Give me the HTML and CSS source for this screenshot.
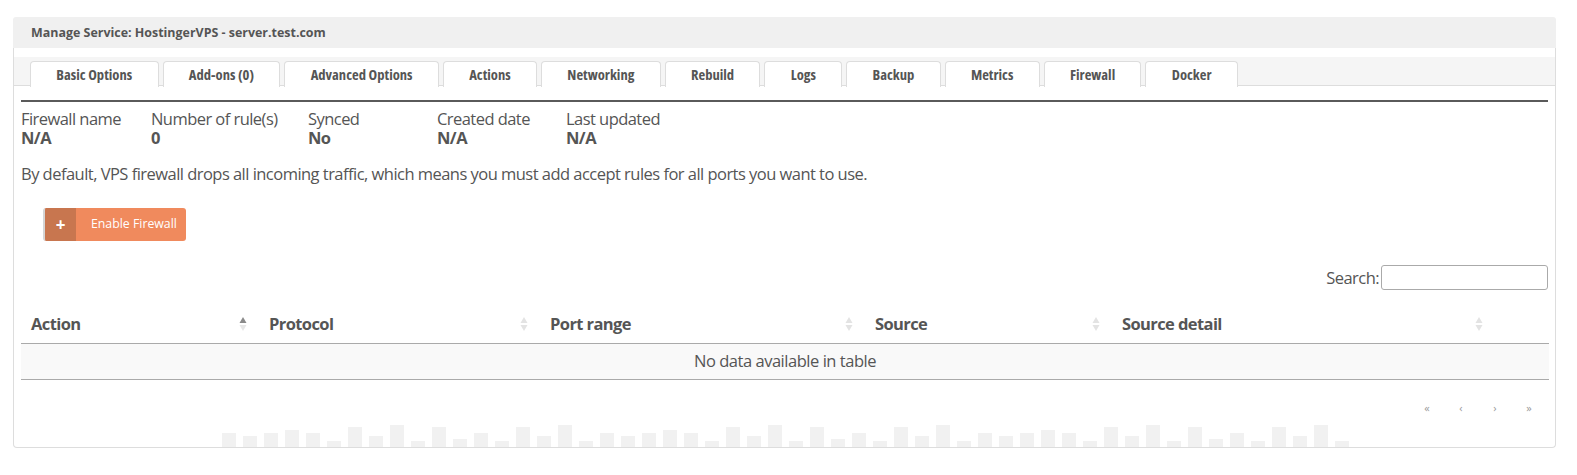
FILE: index.html
```html
<!DOCTYPE html>
<html>
<head>
<meta charset="utf-8">
<link rel="stylesheet" href="styles.css">
</head>
<body>
<div class="wrap">
  <div class="title-bar">Manage Service: HostingerVPS - server.test.com</div>
  <div class="panel">
    <div class="tabs">
      <div class="tab">Basic Options</div>
      <div class="tab">Add-ons (0)</div>
      <div class="tab">Advanced Options</div>
      <div class="tab">Actions</div>
      <div class="tab">Networking</div>
      <div class="tab">Rebuild</div>
      <div class="tab">Logs</div>
      <div class="tab">Backup</div>
      <div class="tab">Metrics</div>
      <div class="tab active">Firewall</div>
      <div class="tab">Docker</div>
    </div>
    <div class="content">
      <div class="info">
        <div class="info-item"><div class="lbl">Firewall name</div><div class="val">N/A</div></div>
        <div class="info-item"><div class="lbl">Number of rule(s)</div><div class="val">0</div></div>
        <div class="info-item"><div class="lbl">Synced</div><div class="val">No</div></div>
        <div class="info-item"><div class="lbl">Created date</div><div class="val">N/A</div></div>
        <div class="info-item"><div class="lbl">Last updated</div><div class="val">N/A</div></div>
      </div>
      <p class="note">By default, VPS firewall drops all incoming traffic, which means you must add accept rules for all ports you want to use.</p>
      <div class="btn-row">
        <button class="btn"><span class="btn-icon">+</span><span class="btn-text">Enable Firewall</span></button>
      </div>
      <div class="search-row">
        <label class="search-lbl">Search:</label><input class="search-input" type="text">
      </div>
      <table class="tbl">
        <colgroup>
          <col class="c1"><col class="c2"><col class="c3"><col class="c4"><col class="c5"><col class="c6">
        </colgroup>
        <thead>
          <tr>
            <th>Action<svg class="sort" width="8" height="18" viewBox="0 0 8 18"><path d="M4 2 L7.5 8 L0.5 8 Z" fill="#8a8a8a"/><path d="M4 16 L7.5 10 L0.5 10 Z" fill="#e6e6e6"/></svg></th>
            <th>Protocol<svg class="sort" width="8" height="18" viewBox="0 0 8 18"><path d="M4 2 L7.5 8 L0.5 8 Z" fill="#e3e3e3"/><path d="M4 16 L7.5 10 L0.5 10 Z" fill="#e3e3e3"/></svg></th>
            <th>Port range<svg class="sort" width="8" height="18" viewBox="0 0 8 18"><path d="M4 2 L7.5 8 L0.5 8 Z" fill="#e3e3e3"/><path d="M4 16 L7.5 10 L0.5 10 Z" fill="#e3e3e3"/></svg></th>
            <th>Source<svg class="sort" width="8" height="18" viewBox="0 0 8 18"><path d="M4 2 L7.5 8 L0.5 8 Z" fill="#e3e3e3"/><path d="M4 16 L7.5 10 L0.5 10 Z" fill="#e3e3e3"/></svg></th>
            <th>Source detail<svg class="sort" width="8" height="18" viewBox="0 0 8 18"><path d="M4 2 L7.5 8 L0.5 8 Z" fill="#e3e3e3"/><path d="M4 16 L7.5 10 L0.5 10 Z" fill="#e3e3e3"/></svg></th>
            <th></th>
          </tr>
        </thead>
        <tbody>
          <tr><td colspan="6" class="empty">No data available in table</td></tr>
        </tbody>
      </table>
      <div class="pager">
        <span>«</span><span>‹</span><span>›</span><span>»</span>
      </div>
      <div class="bars">
        <i style="height:14px"></i><i style="height:11px"></i><i style="height:14px"></i><i style="height:17px"></i><i style="height:14px"></i><i style="height:6px"></i><i style="height:20px"></i><i style="height:11px"></i><i style="height:22px"></i><i style="height:6px"></i><i style="height:20px"></i><i style="height:8px"></i><i style="height:14px"></i><i style="height:6px"></i><i style="height:20px"></i><i style="height:11px"></i><i style="height:22px"></i><i style="height:6px"></i>
        <i style="height:14px"></i><i style="height:11px"></i><i style="height:14px"></i><i style="height:17px"></i><i style="height:14px"></i><i style="height:6px"></i><i style="height:20px"></i><i style="height:11px"></i><i style="height:22px"></i><i style="height:6px"></i><i style="height:20px"></i><i style="height:8px"></i><i style="height:14px"></i><i style="height:6px"></i><i style="height:20px"></i><i style="height:11px"></i><i style="height:22px"></i><i style="height:6px"></i>
        <i style="height:14px"></i><i style="height:11px"></i><i style="height:14px"></i><i style="height:17px"></i><i style="height:14px"></i><i style="height:6px"></i><i style="height:20px"></i><i style="height:11px"></i><i style="height:22px"></i><i style="height:6px"></i><i style="height:20px"></i><i style="height:8px"></i><i style="height:14px"></i><i style="height:6px"></i><i style="height:20px"></i><i style="height:11px"></i><i style="height:22px"></i><i style="height:6px"></i>
      </div>
    </div>
  </div>
</div>
</body>
</html>
```
FILE: styles.css
```css
* { box-sizing: border-box; }
html { overflow: hidden; }
html, body { margin: 0; padding: 0; background: #fff; }
body {
  font-family: "Open Sans", "Liberation Sans", sans-serif;
  color: #555;
}
.wrap {
  width: 1543px;
  margin: 17px 0 0 13px;
}
.title-bar {
  height: 31px;
  background: #f0f0f0;
  border-radius: 3px 3px 0 0;
  padding-left: 18px;
  font-size: 12.45px;
  font-weight: 700;
  line-height: 31px;
  color: #555;
  white-space: nowrap;
}
.panel {
  display: flex;
  flex-direction: column;
  border: 1px solid #ddd;
  border-top: none;
  border-radius: 0 0 4px 4px;
  height: 400px;
  padding-top: 9px;
  overflow: hidden;
}
.tabs {
  display: flex;
  gap: 4px;
  height: 29px;
  padding: 4px 0 0 16px;
  background: #f5f5f5;
  border-bottom: 1px solid #ddd;
  flex: none;
}
.tab {
  height: 26px;
  padding: 0 25.3px;
  background: #fff;
  border: 1px solid #ddd;
  border-bottom: none;
  border-radius: 4px 4px 0 0;
  font-size: 14.6px;
  font-stretch: 75%;
  font-weight: 700;
  line-height: 25px;
  color: #555;
  white-space: nowrap;
}
.content {
  flex: 1;
  display: flex;
  flex-direction: column;
  padding: 14px 7px 0 7px;
}
.info {
  display: grid;
  grid-template-columns: 130px 157px 129px 129px auto;
  border-top: 2px solid #5a5a5a;
  padding-top: 7px;
  font-size: 16.5px;
  letter-spacing: -0.55px;
  line-height: 19px;
}
.lbl { font-weight: 400; white-space: nowrap; }
.val { font-weight: 700; }
.note {
  margin: 15px 0 0 0;
  font-size: 16.5px;
  letter-spacing: -0.53px;
  line-height: 24px;
  white-space: nowrap;
}
.btn-row {
  padding: 22px 0 0 22px;
}
.btn {
  display: flex;
  align-items: stretch;
  height: 33px;
  padding: 0;
  border: none;
  border-left: 2px solid #d5d5d5;
  border-radius: 3px;
  background: #f08a5d;
  color: #fff;
  font-family: "Open Sans", "Liberation Sans", sans-serif;
  font-size: 12.3px;
  overflow: hidden;
  cursor: pointer;
}
.btn-icon {
  width: 31px;
  background: #c8764f;
  font-size: 17px;
  font-weight: 700;
  line-height: 33px;
  text-align: center;
}
.btn-text {
  padding: 0 9px 0 15px;
  line-height: 32px;
  white-space: nowrap;
}
.search-row {
  display: flex;
  justify-content: flex-end;
  align-items: center;
  margin-top: 24px;
  height: 25px;
  font-size: 16.5px;
  letter-spacing: -0.55px;
}
.search-lbl { margin-right: 2px; }
.search-input {
  width: 167px;
  height: 25px;
  border: 1px solid #aaa;
  border-radius: 3px;
  padding: 2px 4px;
  background: #fff;
}
.tbl {
  width: 100%;
  table-layout: fixed;
  margin-top: 15px;
  border-collapse: collapse;
  font-size: 16.5px;
}
.tbl th {
  position: relative;
  height: 38px;
  padding: 0 10px;
  text-align: left;
  font-weight: 700;
  letter-spacing: -0.6px;
  color: #555;
  border-bottom: 1px solid #aaa;
  white-space: nowrap;
}
.tbl th .sort {
  position: absolute;
  right: 12px;
  top: 10px;
}
.c1 { width: 238px; }
.c2 { width: 281px; }
.c3 { width: 325px; }
.c4 { width: 247px; }
.c5 { width: 383px; }
.c6 { width: 54px; }
.tbl td.empty {
  height: 36px;
  background: #f9f9f9;
  text-align: center;
  border-bottom: 1px solid #aaa;
  padding: 0;
  letter-spacing: -0.47px;
  line-height: 20px;
}
.pager {
  display: flex;
  justify-content: flex-end;
  margin-top: 20px;
  padding-right: 2px;
  font-size: 11px;
  color: #999;
  line-height: 16px;
}
.pager span {
  width: 34px;
  text-align: center;
}
.bars {
  display: flex;
  align-items: flex-end;
  gap: 7px;
  height: 22px;
  margin: auto 0 0 201px;
}
.bars i {
  display: block;
  width: 14px;
  background: #f1f1f1;
}
```
